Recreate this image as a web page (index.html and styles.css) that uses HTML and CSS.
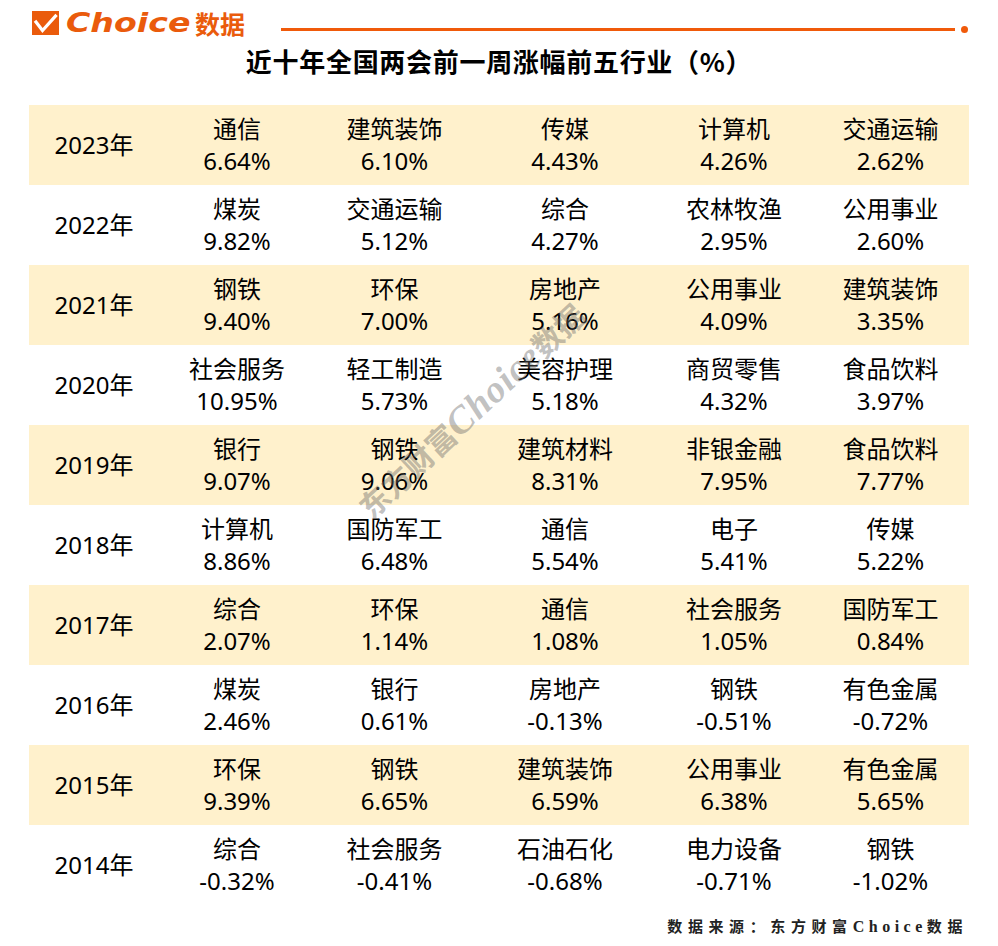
FILE: index.html
```html
<!DOCTYPE html>
<html lang="zh-CN">
<head>
<meta charset="utf-8">
<title>近十年全国两会前一周涨幅前五行业</title>
<link rel="stylesheet" href="styles.css">
</head>
<body>
<div class="page">
  <header class="header">
    <div class="logo">
      <span class="logo-box">
        <svg width="27" height="24" viewBox="0 0 27 24"><rect width="27" height="24" fill="#ea5b0c"/><polyline points="4,11 10.5,19.5 23.5,5" fill="none" stroke="#fff" stroke-width="3.2" stroke-linecap="square"/></svg>
      </span>
      <span class="logo-choice">Choice</span>
      <span class="logo-cn">数据</span>
    </div>
    <div class="rule"><span class="rule-line"></span><span class="rule-dot"></span></div>
  </header>
  <h1 class="title">近十年全国两会前一周涨幅前五行业（%）</h1>
  <div class="table">
    <div class="row alt"><div class="year">2023年</div><div class="cell">通信<br>6.64%</div><div class="cell">建筑装饰<br>6.10%</div><div class="cell">传媒<br>4.43%</div><div class="cell">计算机<br>4.26%</div><div class="cell">交通运输<br>2.62%</div></div>
    <div class="row"><div class="year">2022年</div><div class="cell">煤炭<br>9.82%</div><div class="cell">交通运输<br>5.12%</div><div class="cell">综合<br>4.27%</div><div class="cell">农林牧渔<br>2.95%</div><div class="cell">公用事业<br>2.60%</div></div>
    <div class="row alt"><div class="year">2021年</div><div class="cell">钢铁<br>9.40%</div><div class="cell">环保<br>7.00%</div><div class="cell">房地产<br>5.16%</div><div class="cell">公用事业<br>4.09%</div><div class="cell">建筑装饰<br>3.35%</div></div>
    <div class="row"><div class="year">2020年</div><div class="cell">社会服务<br>10.95%</div><div class="cell">轻工制造<br>5.73%</div><div class="cell">美容护理<br>5.18%</div><div class="cell">商贸零售<br>4.32%</div><div class="cell">食品饮料<br>3.97%</div></div>
    <div class="row alt"><div class="year">2019年</div><div class="cell">银行<br>9.07%</div><div class="cell">钢铁<br>9.06%</div><div class="cell">建筑材料<br>8.31%</div><div class="cell">非银金融<br>7.95%</div><div class="cell">食品饮料<br>7.77%</div></div>
    <div class="row"><div class="year">2018年</div><div class="cell">计算机<br>8.86%</div><div class="cell">国防军工<br>6.48%</div><div class="cell">通信<br>5.54%</div><div class="cell">电子<br>5.41%</div><div class="cell">传媒<br>5.22%</div></div>
    <div class="row alt"><div class="year">2017年</div><div class="cell">综合<br>2.07%</div><div class="cell">环保<br>1.14%</div><div class="cell">通信<br>1.08%</div><div class="cell">社会服务<br>1.05%</div><div class="cell">国防军工<br>0.84%</div></div>
    <div class="row"><div class="year">2016年</div><div class="cell">煤炭<br>2.46%</div><div class="cell">银行<br>0.61%</div><div class="cell">房地产<br>-0.13%</div><div class="cell">钢铁<br>-0.51%</div><div class="cell">有色金属<br>-0.72%</div></div>
    <div class="row alt"><div class="year">2015年</div><div class="cell">环保<br>9.39%</div><div class="cell">钢铁<br>6.65%</div><div class="cell">建筑装饰<br>6.59%</div><div class="cell">公用事业<br>6.38%</div><div class="cell">有色金属<br>5.65%</div></div>
    <div class="row"><div class="year">2014年</div><div class="cell">综合<br>-0.32%</div><div class="cell">社会服务<br>-0.41%</div><div class="cell">石油石化<br>-0.68%</div><div class="cell">电力设备<br>-0.71%</div><div class="cell">钢铁<br>-1.02%</div></div>
    <div class="watermark">东方财富<span class="wm-latin">Choice</span>数据</div>
  </div>
  <footer class="footer">数据来源：东方财富<span class="footer-latin">Choice</span>数据</footer>
</div>
</body>
</html>
```

FILE: styles.css
```css
* { box-sizing: border-box; }
html, body { margin: 0; padding: 0; background: #fff; }
body {
  font-family: "Noto Sans", "Noto Sans CJK SC", sans-serif;
  color: #000;
  width: 998px;
  height: 946px;
  overflow: hidden;
}
.page { width: 998px; }

.header {
  height: 43px;
  display: flex;
  align-items: flex-start;
  padding: 11px 30px 0 32px;
}
.logo {
  display: flex;
  align-items: center;
  height: 24px;
}
.logo-box { display: block; width: 27px; height: 24px; }
.logo-box svg { display: block; }
.logo-choice {
  display: inline-block;
  margin-left: 7px;
  width: 123px;
  font-family: "DejaVu Sans", sans-serif;
  font-weight: bold;
  font-style: italic;
  font-size: 27px;
  line-height: 24px;
  color: #ea5b0c;
  transform: scaleX(1.23);
  transform-origin: left center;
}
.logo-cn {
  margin-left: 6px;
  font-family: "Noto Sans CJK SC", sans-serif;
  font-weight: bold;
  font-size: 25px;
  line-height: 24px;
  color: #ea5b0c;
}
.rule {
  flex: 1;
  display: flex;
  align-items: center;
  gap: 6px;
  margin-left: 36px;
  margin-top: 15px;
  height: 7px;
}
.rule-line { flex: 1; height: 3px; background: #f05a0a; }
.rule-dot { width: 7px; height: 7px; border-radius: 50%; background: #f05a0a; }

.title {
  margin: 0;
  height: 36px;
  line-height: 36px;
  text-align: center;
  font-family: "Noto Sans CJK SC", sans-serif;
  font-weight: bold;
  font-size: 26px;
  color: #000;
  letter-spacing: 0.7px;
  padding-left: 0;
}

.table {
  position: relative;
  margin: 26px 0 0 29px;
  width: 940px;
}
.row {
  display: grid;
  grid-template-columns: 130px 156px 159px 182px 156px 157px;
  height: 80px;
  align-items: center;
}
.row.alt { background: #fff1cc; }
.year, .cell {
  text-align: center;
  font-size: 24px;
  line-height: 32px;
}

.watermark {
  position: absolute;
  left: 442px;
  top: 305px;
  transform: translate(-50%, -50%) rotate(-43deg);
  white-space: nowrap;
  font-family: "Noto Sans CJK SC", sans-serif;
  font-weight: bold;
  font-size: 30px;
  color: rgba(105, 105, 105, 0.42);
  pointer-events: none;
}
.wm-latin {
  font-family: "Liberation Serif", serif;
  font-style: italic;
  font-weight: bold;
  font-size: 38px;
  letter-spacing: 1px;
}

.footer {
  margin-top: 11px;
  padding-right: 30px;
  text-align: right;
  font-family: "Noto Sans CJK SC", sans-serif;
  font-weight: bold;
  font-size: 15px;
  line-height: 20px;
  letter-spacing: 5.6px;
  color: #222;
}
.footer-latin {
  font-family: "Liberation Serif", serif;
  font-size: 16px;
  letter-spacing: 4.5px;
}
```
